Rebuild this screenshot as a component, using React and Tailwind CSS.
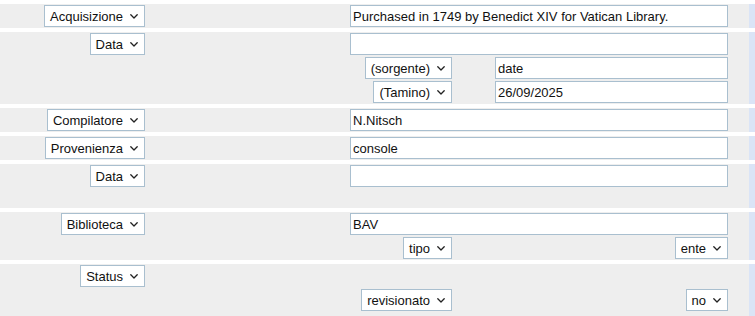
import React from "react";

function Chevron() {
  return (
    <svg width="8" height="5" viewBox="0 0 8 5" className="shrink-0">
      <polyline points="0.8,0.8 4,4 7.2,0.8" fill="none" stroke="#222" strokeWidth="1.3" strokeLinecap="round" strokeLinejoin="round" />
    </svg>
  );
}

function Sel({ children }) {
  return (
    <div className="h-[22px] flex items-center gap-[7px] pl-[5px] pr-[6px] bg-white border border-[#a9bfcf] text-[13px] leading-none text-[#111] whitespace-nowrap">
      <span>{children}</span>
      <Chevron />
    </div>
  );
}

function Inp({ value, className = "" }) {
  return (
    <div className={`h-[22px] flex items-center pl-[2px] bg-white border border-[#a9bfcf] text-[13px] leading-none text-[#111] whitespace-nowrap ${className}`}>
      {value}
    </div>
  );
}

function Row({ label, children }) {
  return (
    <div className="flex bg-[#eeeeee]">
      <div className="w-[146px] pr-[1px] flex flex-col items-end">
        <div className="h-[24px] flex items-center">{label}</div>
      </div>
      <div className="ml-[204px] w-[378px] flex flex-col">{children}</div>
      <div className="flex-1" />
      <div className="w-[6px] bg-[#dae4f6]" />
    </div>
  );
}

function Line({ children, h = "h-[24px]" }) {
  return <div className={`${h} flex items-center`}>{children}</div>;
}

export default function App() {
  return (
    <div className="w-[755px] h-[316px] bg-white pt-[4px] flex flex-col gap-[4px] overflow-hidden" style={{ fontFamily: '"Liberation Sans", Arial, sans-serif' }}>
      <Row label={<Sel>Acquisizione</Sel>}>
        <Line><Inp className="w-[378px]" value="Purchased in 1749 by Benedict XIV for Vatican Library." /></Line>
      </Row>
      <Row label={<Sel>Data</Sel>}>
        <Line><Inp className="w-[378px]" value="" /></Line>
        <Line>
          <div className="w-[102px] flex justify-end"><Sel>(sorgente)</Sel></div>
          <Inp className="ml-[43px] w-[233px]" value="date" />
        </Line>
        <Line>
          <div className="w-[102px] flex justify-end"><Sel>(Tamino)</Sel></div>
          <Inp className="ml-[43px] w-[233px]" value="26/09/2025" />
        </Line>
      </Row>
      <Row label={<Sel>Compilatore</Sel>}>
        <Line><Inp className="w-[378px]" value="N.Nitsch" /></Line>
      </Row>
      <Row label={<Sel>Provenienza</Sel>}>
        <Line><Inp className="w-[378px]" value="console" /></Line>
      </Row>
      <Row label={<Sel>Data</Sel>}>
        <Line><Inp className="w-[378px]" value="" /></Line>
        <Line h="h-[20px]" />
      </Row>
      <Row label={<Sel>Biblioteca</Sel>}>
        <Line><Inp className="w-[378px]" value="BAV" /></Line>
        <Line>
          <div className="w-[102px] flex justify-end"><Sel>tipo</Sel></div>
          <div className="flex-1 flex justify-end"><Sel>ente</Sel></div>
        </Line>
      </Row>
      <Row label={<Sel>Status</Sel>}>
        <Line />
        <Line>
          <div className="w-[102px] flex justify-end"><Sel>revisionato</Sel></div>
          <div className="flex-1 flex justify-end"><Sel>no</Sel></div>
        </Line>
        <Line />
      </Row>
    </div>
  );
}
